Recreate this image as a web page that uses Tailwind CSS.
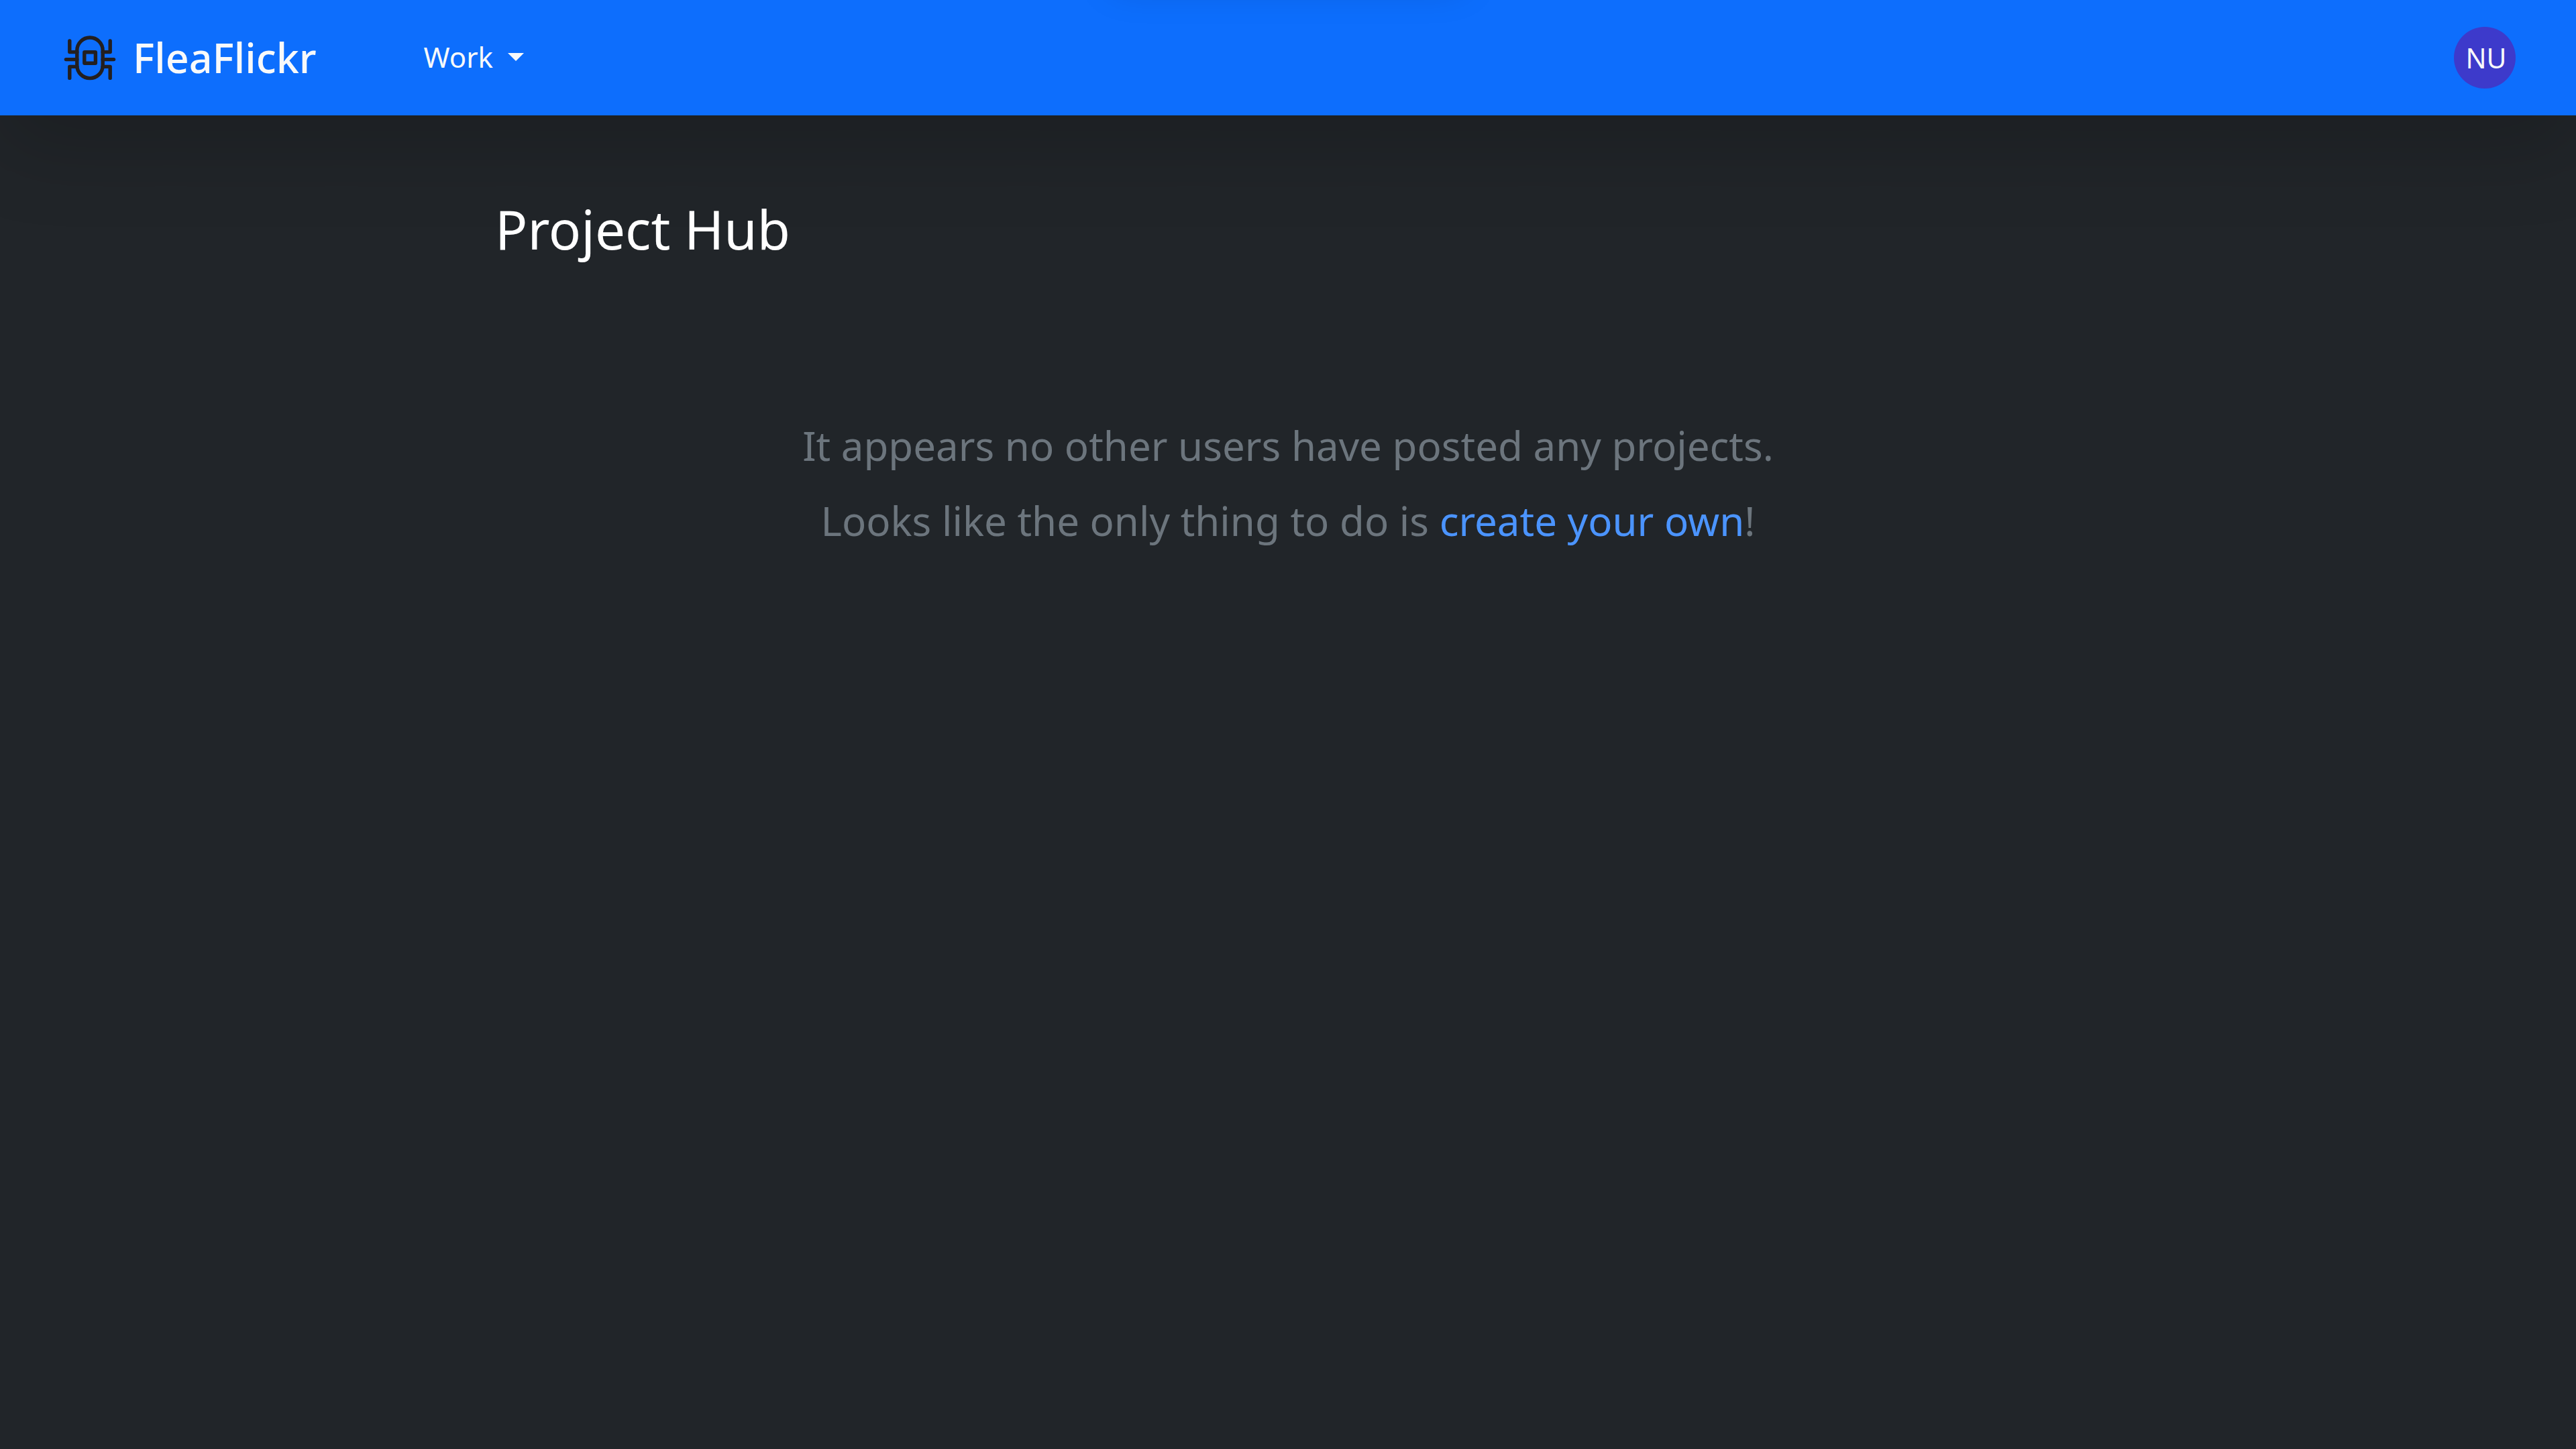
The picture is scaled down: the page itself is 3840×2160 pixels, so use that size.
<!DOCTYPE html>
<html lang="en">
<head>
<meta charset="utf-8">
<meta name="viewport" content="width=device-width, initial-scale=1">
<title>FleaFlickr</title>
<script src="https://cdn.jsdelivr.net/npm/@tailwindcss/browser@4"></script>
</head>
<body class="min-h-screen overflow-x-hidden bg-[#212529] font-['Noto_Sans',sans-serif] text-[#f8f9fa]">
<div class="absolute -top-[102px] left-1/2 h-[60px] w-[520px] -translate-x-1/2 shadow-[0_20px_60px_rgba(0,0,0,0.175)]" aria-hidden="true"></div>
<header class="flex h-[172px] items-center bg-[#0d6efd] pr-[90px] pl-[94px] shadow-[0_43px_128px_rgba(0,0,0,0.175)]">
  <a href="#" class="flex items-center gap-6 text-[61px] leading-[90px] font-medium">
    <svg class="size-[80px]" viewBox="0 0 80 80" fill="none" stroke="#231f20" stroke-width="5.4" stroke-linecap="round" stroke-linejoin="round" aria-hidden="true">
      <rect x="20.8" y="10" width="38.4" height="60.6" rx="19.2"/>
      <rect x="31.8" y="31.8" width="16.6" height="16.4" rx="0.5"/>
      <path d="M9.8 15v16.6h11M4.4 42.6h16.4M9.8 70.4V53.4h11M70.2 15v16.6h-11M75.6 42.6H59.2M70.2 70.4V53.4h-11"/>
    </svg>
    <span>FleaFlickr</span>
  </a>
  <nav class="ml-[160px]">
    <button type="button" class="flex items-center gap-[22px] pb-0.5 text-[42px] leading-[64px]">
      <span>Work</span>
      <svg class="h-3 w-6" viewBox="0 0 24 12" fill="currentColor" aria-hidden="true"><path d="M0 0h24L12 12z"/></svg>
    </button>
  </nav>
  <button type="button" class="ml-auto flex size-[92px] items-center justify-center rounded-full bg-[#3d3acb] pl-1 text-[41px] leading-[60px]">NU</button>
</header>
<main class="mx-auto w-[2364px] max-w-full pt-[119px]">
  <h1 class="text-[80px] leading-[100px] font-normal text-white">Project Hub</h1>
  <div class="flex flex-col gap-[22px] pt-[228px] text-center text-[60px] leading-[90px] text-[#6c757d]">
    <p>It appears no other users have posted any projects.</p>
    <p>Looks like the only thing to do is <a href="#" class="text-[#4b94ff]">create your own</a>!</p>
  </div>
</main>
</body>
</html>
